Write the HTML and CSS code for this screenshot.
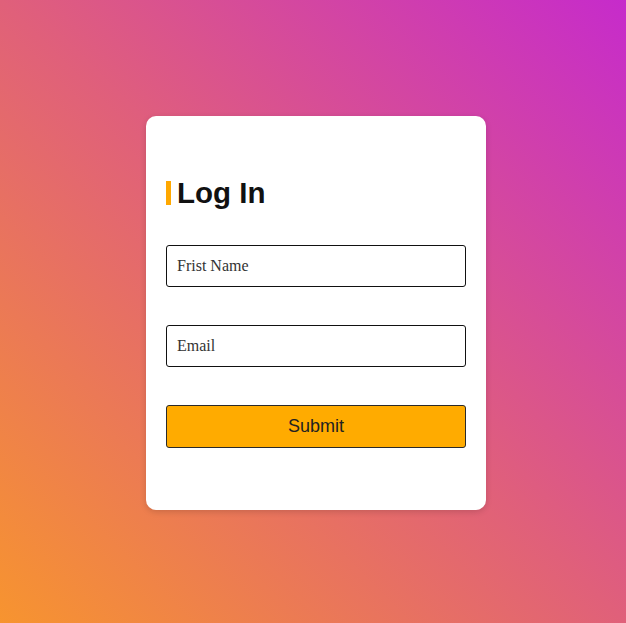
FILE: index.html
```html
<!DOCTYPE html>
<html>
<head>
<meta charset="utf-8">
<link rel="stylesheet" href="styles.css">
</head>
<body>
<main class="page">
  <form class="card">
    <h1 class="title">Log In</h1>
    <input class="field" type="text" placeholder="Frist Name">
    <input class="field" type="email" placeholder="Email">
    <button class="submit" type="button">Submit</button>
  </form>
</main>
</body>
</html>
```
FILE: styles.css
```css
html, body {
  margin: 0;
  padding: 0;
}
body {
  width: 626px;
  height: 623px;
  background: linear-gradient(to top right, #f7942f 0%, #e0607a 50%, #c62bcb 100%);
  font-family: "Liberation Sans", Arial, sans-serif;
  overflow: hidden;
}
.page {
  display: flex;
  justify-content: center;
  align-items: flex-start;
  padding: 116px 0 0 6px;
}
.card {
  width: 340px;
  box-sizing: border-box;
  background: #fff;
  border-radius: 10px;
  box-shadow: 0 2px 6px rgba(0, 0, 0, 0.15);
  padding: 65px 20px 62px;
  display: flex;
  flex-direction: column;
}
.title {
  margin: 0 0 40px;
  font-size: 29.5px;
  font-weight: bold;
  line-height: 24px;
  height: 24px;
  color: #111;
  border-left: 5px solid #ffa800;
  padding-left: 6px;
}
.field {
  height: 42px;
  box-sizing: border-box;
  border: 1px solid #111;
  border-radius: 3px;
  padding: 0 10px;
  font-family: "Liberation Serif", "Times New Roman", serif;
  font-size: 16px;
  color: #222;
  margin: 0 0 38px;
  outline: none;
}
.field::placeholder {
  color: #333;
  opacity: 1;
}
.submit {
  height: 43px;
  box-sizing: border-box;
  border: 1px solid #2a2a2a;
  border-radius: 3px;
  background: #ffab00;
  font-family: "Liberation Sans", Arial, sans-serif;
  font-size: 18px;
  color: #222;
  padding: 0;
  cursor: pointer;
}
```
